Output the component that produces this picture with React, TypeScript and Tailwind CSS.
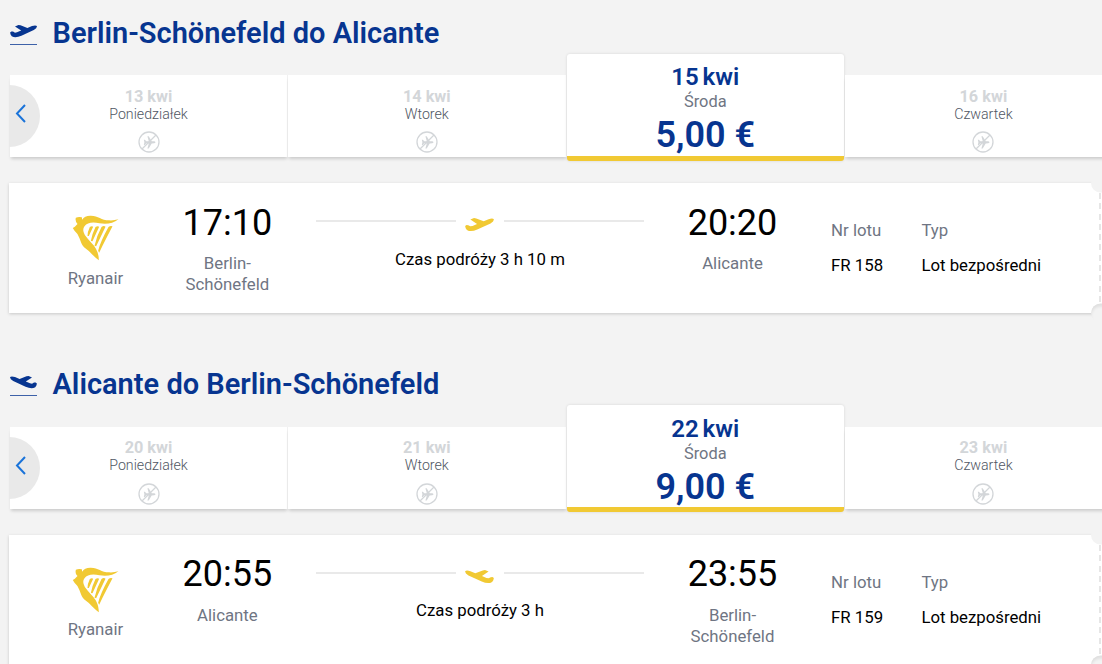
import clsx from "clsx";

interface Day {
  date: string;
  weekday: string;
  price?: string;
}

interface Flight {
  title: string;
  inbound?: boolean;
  days: Day[];
  departure: string;
  from: string[];
  arrival: string;
  to: string[];
  duration: string;
  number: string;
}

const flights: Flight[] = [
  {
    title: "Berlin-Schönefeld do Alicante",
    days: [
      { date: "13 kwi", weekday: "Poniedziałek" },
      { date: "14 kwi", weekday: "Wtorek" },
      { date: "15 kwi", weekday: "Środa", price: "5,00 €" },
      { date: "16 kwi", weekday: "Czwartek" },
    ],
    departure: "17:10",
    from: ["Berlin-", "Schönefeld"],
    arrival: "20:20",
    to: ["Alicante"],
    duration: "Czas podróży 3 h 10 m",
    number: "FR 158",
  },
  {
    title: "Alicante do Berlin-Schönefeld",
    inbound: true,
    days: [
      { date: "20 kwi", weekday: "Poniedziałek" },
      { date: "21 kwi", weekday: "Wtorek" },
      { date: "22 kwi", weekday: "Środa", price: "9,00 €" },
      { date: "23 kwi", weekday: "Czwartek" },
    ],
    departure: "20:55",
    from: ["Alicante"],
    arrival: "23:55",
    to: ["Berlin-", "Schönefeld"],
    duration: "Czas podróży 3 h",
    number: "FR 159",
  },
];

function Plane({ flipped, className }: { flipped?: boolean; className?: string }) {
  return (
    <svg viewBox="0 0 27 14" className={clsx(className, flipped && "-scale-x-100")} fill="currentColor">
      <path d="M.1 8.4 1.4 7.4 3 7.6 5 8.7 7 8.3 11.2 6.6 5 2.4 8.4 1 10.5 1.3 17.4 3.9 22 2q3.8-1.2 4.9.1.3 2.1-3.1 3.9L11.4 11.7q-4.2 1.9-7.8 1.3-2.2-.6-3-2.6z" />
    </svg>
  );
}

function Harp() {
  return (
    <svg viewBox="66 44 140 138" className="h-[46px] w-[47px] text-[#f1c933]" fill="currentColor">
      <path d="M77 52Q86 48 95 51L96 58Q103 46 120 46C144 45 152 60 177 60Q190 61 205 57C189 69 170 73 148 69Q115 62 103 78Q95 88 104 104Q112 115 124 128C138 142 146 158 146 180Q135 172 116 152C93 136 94 129 88 114Q84 100 73 91L68 83 74 79 82 71Q74 63 77 52Z" />
      <path d="M119 80Q125 76 129 79L116 107H112Q112 94 119 80ZM136 80Q142 76 147 79L127 123 122 122Q126 100 136 80ZM154 80Q161 75 166 79L138 138 133 136Q139 108 154 80ZM175 80Q181 75 187 78Q170 111 157 136L147 157 144 151Q151 123 175 80Z" />
    </svg>
  );
}

function NoFlight() {
  return (
    <svg viewBox="0 0 22 22" className="mt-[9.6px] size-[22px] text-[#d3d6d9]" fill="none" stroke="currentColor">
      <circle cx="11" cy="11" r="10" strokeWidth="1.3" />
      <path d="m4 18 14-14" strokeWidth="1.2" />
      <path
        d="M5.8 8.7h1l1.5 1.6 2.5-.1-1.4-5h1.3l3 5 2.6.1q1.2.4 1.2 1t-1.2 1l-2.6.1-3 5H9.4l1.4-5-2.5-.1-1.5 1.6h-1l.6-2.6z"
        fill="currentColor"
        stroke="none"
      />
    </svg>
  );
}

function DayTab({ day }: { day: Day }) {
  if (day.price) {
    return (
      <div className="mr-px flex h-[107px] flex-col items-center rounded-[3px] border-b-[5px] border-[#f1c933] bg-white pt-[9.2px] shadow-[0_0_3px_rgba(0,0,0,0.12)]">
        <div className="text-[24px] leading-7 font-semibold text-[#073590] [word-spacing:-2px]">{day.date}</div>
        <div className="mt-px text-[16.4px] leading-5 text-[#6f7583]">{day.weekday}</div>
        <div className="mt-[2px] text-[36px] leading-[42px] font-semibold text-[#073590]">{day.price}</div>
      </div>
    );
  }
  return (
    <div className="mt-[21.2px] flex h-[82px] flex-col items-center border-r border-[#f1f1f1] bg-white pt-[11.8px] pr-[0.3px] shadow-[0_3px_3px_-1px_rgba(0,0,0,0.16)]">
      <div className="text-[16.3px] leading-[19px] font-bold text-[#d3d6d9]">{day.date}</div>
      <div className="text-[14.2px] leading-4 font-light text-[#4f5663]">{day.weekday}</div>
      <NoFlight />
    </div>
  );
}

function Stop({ time, city }: { time: string; city: string[] }) {
  return (
    <div className="flex w-[110px] flex-col items-center pt-[18.5px]">
      <div className="text-[36px] leading-[42px]">{time}</div>
      <div className="mt-[9.6px] text-center leading-[21px] text-[#6f7583]">
        {city.map((line) => (
          <div key={line}>{line}</div>
        ))}
      </div>
    </div>
  );
}

function Info({ label, value }: { label: string; value: string }) {
  return (
    <div className="pt-[37px]">
      <div className="leading-5 text-[#6f7583]">{label}</div>
      <div className="mt-[15px] leading-5">{value}</div>
    </div>
  );
}

function FlightCard({ flight }: { flight: Flight }) {
  return (
    <div className="relative mt-[22.2px] ml-[9px] flex h-[130px] bg-white text-[16.8px] shadow-[0_1px_3px_rgba(0,0,0,0.18)]">
      <div className="ml-[53px] flex w-[67px] flex-col items-center pt-[32px]">
        <Harp />
        <div className="mt-[6.6px] leading-5 text-[#6f7583]">Ryanair</div>
      </div>
      <div className="ml-[43.4px]">
        <Stop time={flight.departure} city={flight.from} />
      </div>
      <div className="ml-[33.6px] w-[328px] pt-[33px]">
        <div className="flex h-4 justify-between">
          <div className="mt-1 h-[2px] w-[140px] bg-[#e9e9e9]" />
          <Plane flipped={flight.inbound} className="mt-px h-[15px] w-[29px] text-[#f1c933]" />
          <div className="mt-1 h-[2px] w-[140px] bg-[#e9e9e9]" />
        </div>
        <div className="mt-[16.5px] text-center leading-5">{flight.duration}</div>
      </div>
      <div className="ml-[33.5px]">
        <Stop time={flight.arrival} city={flight.to} />
      </div>
      <div className="ml-[43.6px] w-[90.3px]">
        <Info label="Nr lotu" value={flight.number} />
      </div>
      <Info label="Typ" value="Lot bezpośredni" />
      {/* Tear-off edge of the ticket */}
      <div className="absolute top-0 right-[-8px] size-[19px] -translate-y-1/2 rounded-full bg-[#f3f3f3]" />
      <div className="absolute right-[-8px] bottom-0 size-[19px] translate-y-1/2 rounded-full bg-[#f3f3f3] shadow-[inset_0_3px_3px_rgba(0,0,0,0.08)]" />
      <div className="absolute top-[10px] right-[1px] h-[111px] w-[2px] bg-[repeating-linear-gradient(#e6e6e6_0_6px,transparent_6px_10.3px)]" />
    </div>
  );
}

function FlightSection({ flight }: { flight: Flight }) {
  return (
    <section className="h-[351.5px]">
      <h2 className="flex h-[53.9px] pt-[15.9px] pl-[10px] text-[#073590]">
        <span className="mt-[7.9px] flex h-[21px] w-[27px] flex-col justify-between border-b border-[#3d61a8]">
          <Plane flipped={flight.inbound} className="h-[14px] w-[27px]" />
        </span>
        <span className="ml-[15.5px] text-[29px] leading-[34px] font-semibold">{flight.title}</span>
      </h2>
      <div className="relative ml-[10px] grid h-[107px] grid-cols-[repeat(4,278.3px)]">
        {flight.days.map((day) => (
          <DayTab key={day.date} day={day} />
        ))}
        <button className="absolute top-[31.3px] left-[-1px] flex h-[62px] w-[31px] items-center rounded-r-full bg-[#e9e9e9] pb-[5px] pl-[6px]">
          <svg viewBox="0 0 11 19" className="h-[19px] w-[11px]" fill="none" stroke="#1a73d9" strokeWidth="2">
            <path d="M10 1 2 9.5 10 18" />
          </svg>
        </button>
      </div>
      <FlightCard flight={flight} />
    </section>
  );
}

export default function App() {
  return (
    <main className="h-[664px] w-[1102px] overflow-hidden bg-[#f3f3f3] font-[Roboto,sans-serif] text-black">
      {flights.map((flight) => (
        <FlightSection key={flight.title} flight={flight} />
      ))}
    </main>
  );
}
